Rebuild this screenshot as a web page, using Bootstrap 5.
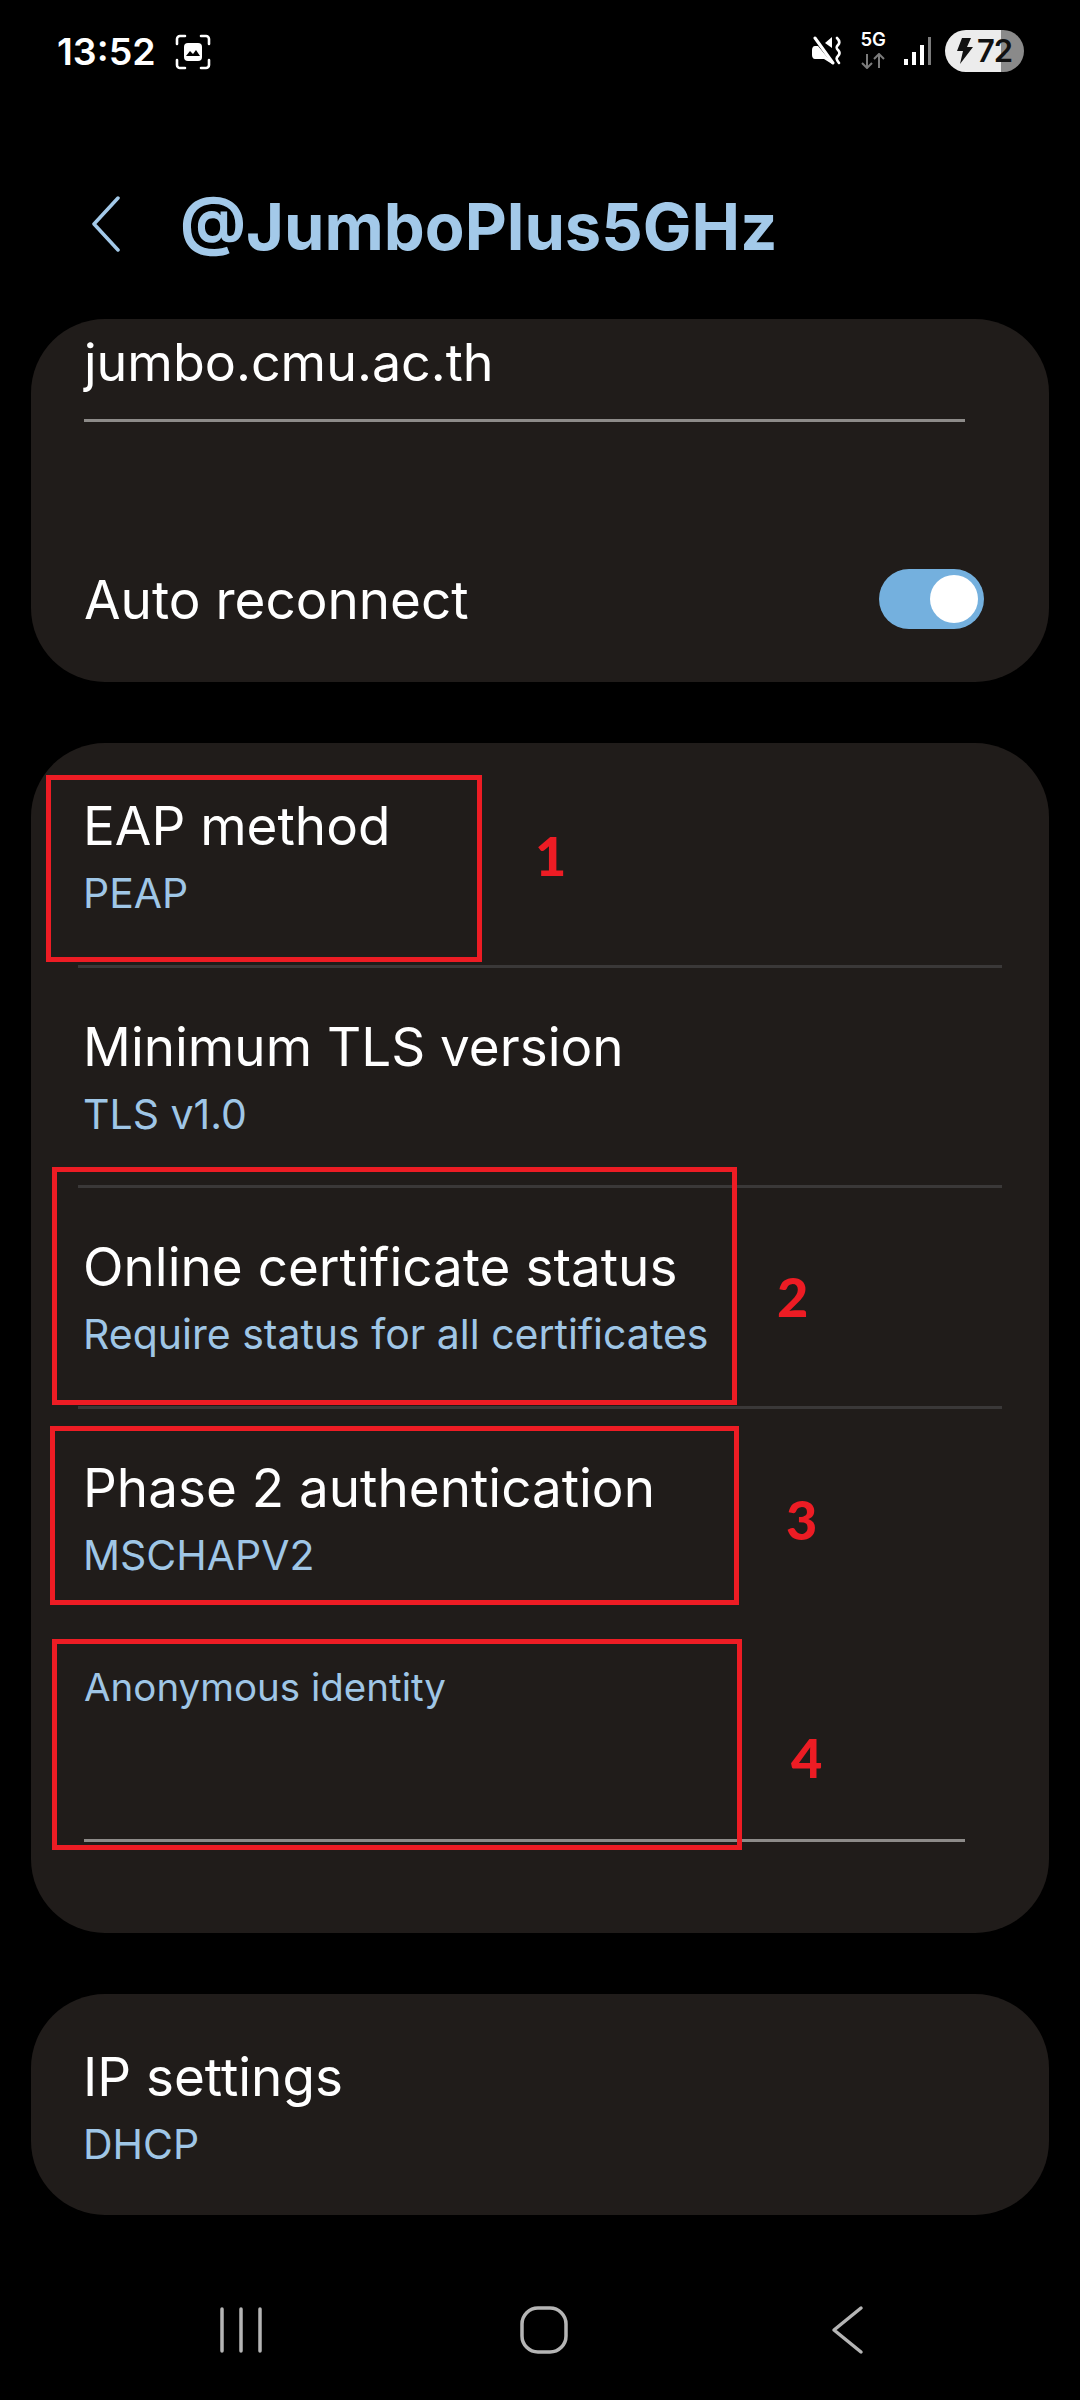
<!DOCTYPE html>
<html lang="en">
<head>
<meta charset="utf-8">
<title>@JumboPlus5GHz</title>
<link href="https://cdn.jsdelivr.net/npm/bootstrap@5.3.0/dist/css/bootstrap.min.css" rel="stylesheet">
<style>
html,body{background:#000;margin:0}
body{width:1080px;height:2400px;position:relative;overflow:hidden;font-family:Inter,"Noto Sans",sans-serif;color:#fff}
.stat-bar{height:100px;padding:30px 56px 0 57px}
.clock{font-size:37.5px;font-weight:600;line-height:44px}
.shot-ic{margin-left:19px}
.stat-r{gap:17px}
.net-g{font-size:18.5px;font-weight:600;line-height:16px;text-align:center;letter-spacing:-.3px}
.batt{width:79px;height:42px;margin-left:-4px;border-radius:21px;background:linear-gradient(90deg,#ececec 0,#ececec 71%,#8a8a8a 71%);color:#111;font-size:31px;font-weight:600;padding-left:10px;line-height:42px;letter-spacing:-1px}
.app-head{height:220px;padding:30px 0 0 90px;margin-top:-1px}
.head-title{font-size:65px;font-weight:700;color:#a3c9e9;margin:6px 0 0 58px;line-height:72px}
.sheet{background:#201c1a;border:0;border-radius:74px;margin:0 31px;color:#fff}
.sheet-a{height:363px;margin-bottom:61px}
.sheet-b{height:1190px;margin-bottom:61px}
.sheet-c{height:221px}
.edit-val{font-size:52px;line-height:56px;padding:16px 0 0 53px}
.edit-line{height:3px;background:#8d8b89;margin:28px 84px 0 53px}
.auto-row{padding:0 65px 0 53px;height:60px;margin-top:148px}
.auto-txt{font-size:53px;line-height:60px}
.tog{width:105px;height:60px;margin-top:-3px;border-radius:30px;background:#74b0de;position:relative}
.tog-k{position:absolute;right:6px;top:6px;width:48px;height:48px;border-radius:50%;background:#fff}
.set-list{background:transparent;padding-top:4px}
.list-group-flush .set-row{background:transparent;border:0;height:220.5px;margin:0 47px;padding:51px 0 0 5px;color:#fff}
.list-group-flush .set-row-line{border-bottom:3px solid #3a3838}
.set-t{font-size:53px;line-height:56px}
.set-s{font-size:41px;line-height:44px;color:#9fc6e6;margin-top:17px}
.anon-lbl{font-size:38.5px;line-height:44px;color:#9fc6e6;padding:0 0 0 53px;margin-top:36px}
.anon-line{height:3px;background:#8d8b89;margin:130px 84px 0 53px}
.nav-strip{position:absolute;left:0;right:0;bottom:0;height:140px;padding-left:8px}
.nav-cell{width:303px;text-align:center}
.red-box{position:absolute;border:5px solid #ed1c24;pointer-events:none}
.red-n{position:absolute;color:#ed1c24;font-family:Lato,sans-serif;font-weight:900;font-size:54px;line-height:60px}
</style>
</head>
<body>
<div class="stat-bar d-flex justify-content-between align-items-start">
  <div class="d-flex align-items-center">
    <span class="clock">13:52</span>
    <svg class="shot-ic" width="36" height="36" viewBox="0 0 36 36" fill="none">
      <path d="M2 10V5a3 3 0 0 1 3-3h5M26 2h5a3 3 0 0 1 3 3v5M34 26v5a3 3 0 0 1-3 3h-5M10 34H5a3 3 0 0 1-3-3v-5" stroke="#fff" stroke-width="2.6" stroke-linecap="round"/>
      <rect x="9" y="9" width="18" height="18" rx="4" fill="#fff"/>
      <path d="M11 22l4-5 3 3 3-4 4 6z" fill="#000"/>
    </svg>
  </div>
  <div class="d-flex align-items-center stat-r">
    <svg width="30" height="30" viewBox="0 0 30 30" fill="none">
      <path d="M13 7l7-6v11z" fill="#fff"/>
      <path d="M0 14c0-2 1-4 3-4h3l14 17v1l-8-5H3c-2 0-3-2-3-4z" fill="#fff"/>
      <path d="M3 2l18 25" stroke="#fff" stroke-width="3" stroke-linecap="round"/>
      <path d="M25 2c3 3 3 5 1 7s-2 3 0 5 2 4 0 6-2 3 1 7" stroke="#fff" stroke-width="2.6" stroke-linecap="round"/>
    </svg>
    <div style="width:28px">
      <div class="net-g">5G</div>
      <svg width="28" height="16" viewBox="0 0 28 16" fill="none" stroke="#7b7b7b" stroke-width="2"><path d="M8 1v14M3 10l5 5 5-5M20 15V1M15 6l5-5 5 5"/></svg>
    </div>
    <svg width="28" height="30" viewBox="0 0 28 30">
      <rect x="0" y="23" width="4" height="6" fill="#fff"/><rect x="8" y="16" width="4" height="13" fill="#fff"/><rect x="16" y="9" width="4" height="20" fill="#fff"/><rect x="24" y="1" width="3" height="28" fill="#7b7b7b"/>
    </svg>
    <div class="batt d-flex align-items-center">
      <svg width="18" height="28" viewBox="0 0 18 28" class="me-1"><path d="M7 1h9l-4 9h6L5 27l3-13H2z" fill="#111"/></svg><span>72</span>
    </div>
  </div>
</div>

<div class="app-head d-flex align-items-center">
  <svg width="32" height="56" viewBox="0 0 32 56" fill="none"><path d="M28 2L4 28l24 26" stroke="#a3c9e9" stroke-width="3.5" stroke-linecap="round" stroke-linejoin="round"/></svg>
  <h1 class="head-title">@JumboPlus5GHz</h1>
</div>

<div class="card sheet sheet-a">
  <div class="edit-val">jumbo.cmu.ac.th</div>
  <div class="edit-line"></div>
  <div class="auto-row d-flex justify-content-between align-items-center">
    <span class="auto-txt">Auto reconnect</span>
    <span class="tog"><span class="tog-k"></span></span>
  </div>
</div>

<div class="card sheet sheet-b">
  <div class="list-group list-group-flush set-list">
    <div class="list-group-item set-row set-row-line"><div class="set-t">EAP method</div><div class="set-s">PEAP</div></div>
    <div class="list-group-item set-row set-row-line"><div class="set-t">Minimum TLS version</div><div class="set-s">TLS v1.0</div></div>
    <div class="list-group-item set-row set-row-line"><div class="set-t">Online certificate status</div><div class="set-s">Require status for all certificates</div></div>
    <div class="list-group-item set-row"><div class="set-t">Phase 2 authentication</div><div class="set-s">MSCHAPV2</div></div>
  </div>
  <div class="anon-lbl">Anonymous identity</div>
  <div class="anon-line"></div>
</div>

<div class="card sheet sheet-c">
  <div class="list-group list-group-flush set-list">
    <div class="list-group-item set-row"><div class="set-t">IP settings</div><div class="set-s">DHCP</div></div>
  </div>
</div>

<div class="nav-strip d-flex align-items-center justify-content-center">
  <div class="nav-cell"><svg width="46" height="48" viewBox="0 0 46 48" stroke="#b5b5b5" stroke-width="3.5" stroke-linecap="round"><path d="M4 3v42M23 3v42M42 3v42"/></svg></div>
  <div class="nav-cell"><svg width="50" height="50" viewBox="0 0 50 50" fill="none"><rect x="3" y="3" width="44" height="44" rx="16" stroke="#b5b5b5" stroke-width="3.5"/></svg></div>
  <div class="nav-cell"><svg width="34" height="50" viewBox="0 0 34 50" fill="none"><path d="M31 3L4 25l27 22" stroke="#b5b5b5" stroke-width="3.5" stroke-linecap="round" stroke-linejoin="round"/></svg></div>
</div>

<div class="red-box" style="left:46px;top:775px;width:436px;height:187px"></div>
<div class="red-box" style="left:52px;top:1167px;width:685px;height:238px"></div>
<div class="red-box" style="left:50px;top:1426px;width:689px;height:179px"></div>
<div class="red-box" style="left:52px;top:1639px;width:690px;height:211px"></div>
<div class="red-n" style="left:535px;top:826px">1</div>
<div class="red-n" style="left:777px;top:1267px">2</div>
<div class="red-n" style="left:786px;top:1490px">3</div>
<div class="red-n" style="left:791px;top:1728px">4</div>
</body>
</html>
